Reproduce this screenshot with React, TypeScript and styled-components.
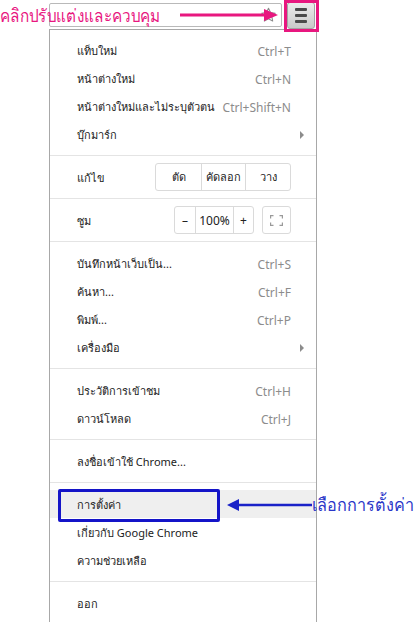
import React from 'react';
import styled, { createGlobalStyle } from 'styled-components';

const Global = createGlobalStyle`
  html, body { margin: 0; padding: 0; background: #fff; }
  body {
    width: 418px; height: 622px; overflow: hidden;
    font-family: Tahoma, "Noto Sans", "DejaVu Sans", sans-serif;
  }
`;

const Page = styled.div`
  position: relative;
  width: 418px;
  height: 622px;
  overflow: hidden;
  background: #fff;
`;

const Toolbar = styled.div`
  display: flex;
  align-items: flex-start;
  height: 29px;
  padding-left: 49px;
`;

const Omnibox = styled.div`
  box-sizing: border-box;
  margin-top: 3px;
  width: 233px;
  height: 24px;
  border: 1px solid #b9b9b9;
  border-radius: 2px;
  background: #fff;
  display: flex;
  align-items: center;
  justify-content: flex-end;
  padding-right: 4px;
`;

const MenuButton = styled.div`
  box-sizing: border-box;
  margin-top: 2px;
  margin-left: 5px;
  width: 28px;
  height: 27px;
  border: 1px solid #a3a3a3;
  border-radius: 3px;
  background: linear-gradient(#ececec, #c9c9c9);
  display: flex;
  flex-direction: column;
  align-items: center;
  justify-content: center;
  gap: 3px;
`;

const Bar = styled.div`
  width: 12px;
  height: 3px;
  border-radius: 1px;
  background: #4a4a4a;
`;

const Menu = styled.div`
  box-sizing: border-box;
  margin-left: 49px;
  width: 268px;
  border: 1px solid #a8a8a8;
  border-bottom: none;
  padding-top: 6px;
  background: #fff;
  font-size: 11px;
  color: #222;
`;

const Row = styled.div<{ $hl?: boolean }>`
  position: relative;
  box-sizing: border-box;
  display: flex;
  align-items: center;
  height: 28px;
  padding: 2px 25px 0 27px;
  background: ${(p) => (p.$hl ? '#efefef' : 'transparent')};
`;

const Label = styled.span`
  flex: 1;
  white-space: nowrap;
`;

const Shortcut = styled.span`
  color: #8c8c8c;
  font-family: "Noto Sans", "Open Sans", sans-serif;
  font-size: 12px;
  white-space: nowrap;
`;

const SubArrow = styled.span`
  width: 0;
  height: 0;
  margin-right: -13px;
  border-top: 4px solid transparent;
  border-bottom: 4px solid transparent;
  border-left: 4px solid #8c8c8c;
`;

const Separator = styled.div`
  height: 1px;
  margin: 7px 0;
  background: #e4e4e4;
`;

const Group = styled.div`
  display: flex;
  height: 28px;
  box-sizing: border-box;
  border: 1px solid #dadada;
  border-radius: 3px;
  margin-top: -2px;
`;

const GroupBtn = styled.div<{ $w: number; $latin?: boolean }>`
  box-sizing: border-box;
  width: ${(p) => p.$w}px;
  display: flex;
  align-items: center;
  justify-content: center;
  font-size: ${(p) => (p.$latin ? '12px' : '11px')};
  font-family: ${(p) => (p.$latin ? '"Noto Sans", sans-serif' : 'inherit')};
  color: #222;
  & + & { border-left: 1px solid #dadada; }
`;

const FullBtn = styled.div`
  box-sizing: border-box;
  margin-left: 8px;
  margin-top: -2px;
  width: 29px;
  height: 28px;
  border: 1px solid #dadada;
  border-radius: 3px;
  display: flex;
  align-items: center;
  justify-content: center;
`;

const BlueBox = styled.div`
  position: absolute;
  left: 8px;
  top: -1px;
  width: 162px;
  height: 33px;
  box-sizing: border-box;
  border: 3px solid #1414c8;
  border-radius: 2px;
`;

const PinkBox = styled.div`
  position: absolute;
  left: 284px;
  top: 0;
  width: 35px;
  height: 32px;
  box-sizing: border-box;
  border: 3px solid #e8177f;
`;

const PinkLabel = styled.div`
  position: absolute;
  left: 0;
  top: 2px;
  font-size: 18px;
  line-height: 26px;
  color: #e8177f;
  white-space: nowrap;
  transform: scaleX(0.85);
  transform-origin: left center;
`;

const BlueLabel = styled.div`
  position: absolute;
  left: 312px;
  top: 491px;
  font-size: 18px;
  line-height: 26px;
  color: #2a36c8;
  white-space: nowrap;
  transform: scaleX(0.9);
  transform-origin: left center;
`;

const Arrow = styled.svg`
  position: absolute;
  overflow: visible;
`;

const Star = () => (
  <svg width="17" height="18" viewBox="0 0 24 24">
    <path
      d="M12 2.5l2.9 6.1 6.6.8-4.9 4.6 1.3 6.6L12 17.3l-5.9 3.3 1.3-6.6-4.9-4.6 6.6-.8z"
      fill="none"
      stroke="#8a8a8a"
      strokeWidth="1.5"
      strokeLinejoin="round"
    />
  </svg>
);

const FullIcon = () => (
  <svg width="13" height="11" viewBox="0 0 13 11">
    <path d="M0.5 3.5v-3h3M9.5 0.5h3v3M12.5 7.5v3h-3M3.5 10.5h-3v-3" fill="none" stroke="#9a9a9a" strokeWidth="1.4" />
  </svg>
);

type Item = { label: string; sc?: string; sub?: boolean; hl?: boolean };

const Items = ({ list }: { list: Item[] }) => (
  <>
    {list.map((it) => (
      <Row key={it.label} $hl={it.hl}>
        <Label>{it.label}</Label>
        {it.sc && <Shortcut>{it.sc}</Shortcut>}
        {it.sub && <SubArrow />}
        {it.hl && <BlueBox />}
      </Row>
    ))}
  </>
);

export default function App() {
  return (
    <Page>
      <Global />
      <Toolbar>
        <Omnibox>
          <Star />
        </Omnibox>
        <MenuButton>
          <Bar />
          <Bar />
          <Bar />
        </MenuButton>
      </Toolbar>
      <Menu>
        <Items
          list={[
            { label: 'แท็บใหม่', sc: 'Ctrl+T' },
            { label: 'หน้าต่างใหม่', sc: 'Ctrl+N' },
            { label: 'หน้าต่างใหม่และไม่ระบุตัวตน', sc: 'Ctrl+Shift+N' },
            { label: 'บุ๊กมาร์ก', sub: true },
          ]}
        />
        <Separator />
        <Row>
          <Label>แก้ไข</Label>
          <Group>
            <GroupBtn $w={45}>ตัด</GroupBtn>
            <GroupBtn $w={44}>คัดลอก</GroupBtn>
            <GroupBtn $w={45}>วาง</GroupBtn>
          </Group>
        </Row>
        <Separator />
        <Row>
          <Label>ซูม</Label>
          <Group>
            <GroupBtn $w={20} $latin>–</GroupBtn>
            <GroupBtn $w={38} $latin>100%</GroupBtn>
            <GroupBtn $w={20} $latin>+</GroupBtn>
          </Group>
          <FullBtn>
            <FullIcon />
          </FullBtn>
        </Row>
        <Separator />
        <Items
          list={[
            { label: 'บันทึกหน้าเว็บเป็น...', sc: 'Ctrl+S' },
            { label: 'ค้นหา...', sc: 'Ctrl+F' },
            { label: 'พิมพ์...', sc: 'Ctrl+P' },
            { label: 'เครื่องมือ', sub: true },
          ]}
        />
        <Separator />
        <Items
          list={[
            { label: 'ประวัติการเข้าชม', sc: 'Ctrl+H' },
            { label: 'ดาวน์โหลด', sc: 'Ctrl+J' },
          ]}
        />
        <Separator />
        <Items list={[{ label: 'ลงชื่อเข้าใช้ Chrome...' }]} />
        <Separator />
        <Items
          list={[
            { label: 'การตั้งค่า', hl: true },
            { label: 'เกี่ยวกับ Google Chrome' },
            { label: 'ความช่วยเหลือ' },
          ]}
        />
        <Separator />
        <Items list={[{ label: 'ออก' }]} />
        <Row />
      </Menu>

      <PinkLabel>คลิกปรับแต่งและควบคุม</PinkLabel>
      <Arrow style={{ left: 180, top: 8 }} width="100" height="14" viewBox="0 0 100 14">
        <line x1="0" y1="7" x2="88" y2="7" stroke="#e8177f" strokeWidth="3" />
        <path d="M84 1 L98 7 L84 13 Z" fill="#e8177f" />
      </Arrow>
      <PinkBox />

      <Arrow style={{ left: 226, top: 498 }} width="86" height="14" viewBox="0 0 86 14">
        <line x1="10" y1="7" x2="86" y2="7" stroke="#1a22c8" strokeWidth="2.5" />
        <path d="M13 1 L1 7 L13 13 Z" fill="#1a22c8" />
      </Arrow>
      <BlueLabel>เลือกการตั้งค่า</BlueLabel>
    </Page>
  );
}
